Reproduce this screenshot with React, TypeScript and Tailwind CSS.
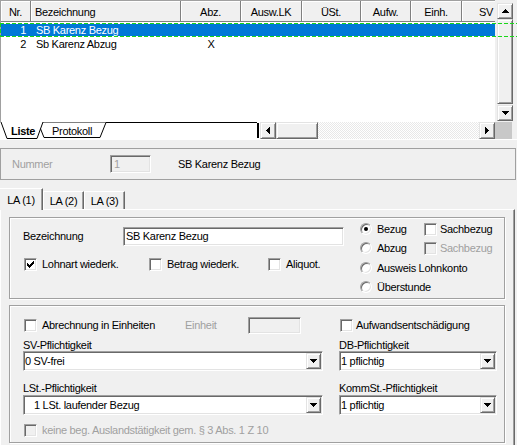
import React from 'react';

const sunken =
  'border border-t-[#a0a0a0] border-l-[#a0a0a0] border-r-white border-b-white shadow-[inset_1px_1px_0_#696969,inset_-1px_-1px_0_#e3e3e3] p-px';
const raised =
  'bg-[#f0f0f0] border border-t-[#e3e3e3] border-l-[#e3e3e3] border-r-[#696969] border-b-[#696969] shadow-[inset_1px_1px_0_#ffffff,inset_-1px_-1px_0_#a0a0a0]';
const groupBox =
  'border border-[#a0a0a0] shadow-[inset_1px_1px_0_#ffffff,1px_1px_0_#ffffff]';

type Dir = 'up' | 'down' | 'left' | 'right';
const ARROWS: Record<Dir, { w: number; h: number; d: string }> = {
  down: { w: 7, h: 4, d: 'M0 0h7v1H0zM1 1h5v1H1zM2 2h3v1H2zM3 3h1v1H3z' },
  up: { w: 7, h: 4, d: 'M3 0h1v1H3zM2 1h3v1H2zM1 2h5v1H1zM0 3h7v1H0z' },
  right: { w: 4, h: 7, d: 'M0 0h1v7H0zM1 1h1v5H1zM2 2h1v3H2zM3 3h1v1H3z' },
  left: { w: 4, h: 7, d: 'M3 0h1v7H3zM2 1h1v5H2zM1 2h1v3H1zM0 3h1v1H0z' },
};

function Arrow({ dir }: { dir: Dir }) {
  const a = ARROWS[dir];
  return (
    <svg width={a.w} height={a.h} viewBox={`0 0 ${a.w} ${a.h}`} shapeRendering="crispEdges">
      <path d={a.d} fill="#000" />
    </svg>
  );
}

function Box({ checked, disabled }: { checked?: boolean; disabled?: boolean }) {
  return (
    <span
      className={`w-[13px] h-[13px] shrink-0 flex items-center justify-center ${sunken} ${
        disabled ? 'bg-[#f0f0f0]' : 'bg-white'
      }`}
    >
      {checked && (
        <svg width="7" height="7" viewBox="0 0 7 7" shapeRendering="crispEdges">
          <path d="M0 2h1v3H0zM1 3h1v3H1zM2 4h1v3H2zM3 3h1v3H3zM4 2h1v3H4zM5 1h1v3H5zM6 0h1v3H6z" fill="#000" />
        </svg>
      )}
    </span>
  );
}

function CheckItem({
  label,
  checked,
  disabled,
  gap = 'ml-[5px]',
  className = '',
}: {
  label: string;
  checked?: boolean;
  disabled?: boolean;
  gap?: string;
  className?: string;
}) {
  return (
    <div className={`flex items-center h-[13px] ${className}`}>
      <Box checked={checked} disabled={disabled} />
      <span className={`${gap} whitespace-nowrap ${disabled ? 'text-[#a0a0a0]' : ''}`}>{label}</span>
    </div>
  );
}

function Radio({ label, on, className = '' }: { label: string; on?: boolean; className?: string }) {
  return (
    <div className={`flex items-center h-[14px] ${className}`}>
      <span className="w-[12px] h-[12px] shrink-0 rounded-full bg-white border border-t-[#a0a0a0] border-l-[#a0a0a0] border-r-white border-b-white shadow-[inset_1px_1px_0_#696969,inset_-1px_-1px_0_#e3e3e3] flex items-center justify-center">
        {on && <span className="w-[4px] h-[4px] rounded-full bg-black" />}
      </span>
      <span className="ml-[5px] whitespace-nowrap">{label}</span>
    </div>
  );
}

function Combo({ value, className = '', textPad = '' }: { value: string; className?: string; textPad?: string }) {
  return (
    <div className={`h-[20px] flex bg-white ${sunken} ${className}`}>
      <div className={`flex-1 flex items-center whitespace-nowrap ${textPad}`}>{value}</div>
      <div className={`w-[15px] flex items-center justify-center ${raised}`}>
        <Arrow dir="down" />
      </div>
    </div>
  );
}

const COLS = [
  { t: 'Nr.', c: 'w-[30px] justify-center' },
  { t: 'Bezeichnung', c: 'w-[150px] justify-start pl-[4px]' },
  { t: 'Abz.', c: 'w-[60px] justify-center' },
  { t: 'Ausw.LK', c: 'w-[61px] justify-center' },
  { t: 'ÜSt.', c: 'w-[59px] justify-center' },
  { t: 'Aufw.', c: 'w-[50px] justify-center' },
  { t: 'Einh.', c: 'w-[51px] justify-center' },
  { t: 'SV', c: 'w-[34px] justify-end pr-[2px]' },
];

const ROWS = [
  { nr: '1', name: 'SB Karenz Bezug', abz: '', selected: true },
  { nr: '2', name: 'Sb Karenz Abzug', abz: 'X', selected: false },
];

const dash = 'bg-[repeating-linear-gradient(90deg,#18d818_0_4px,transparent_4px_6px)]';

export default function App() {
  return (
    <div className="w-[517px] h-[445px] overflow-hidden bg-[#f0f0f0] text-black text-[11px] leading-[13px] tracking-[-0.3px] font-['Liberation_Sans',Arial,sans-serif]">
      {/* List */}
      <div className="relative">
        <div className="flex h-[122px]">
          <div className="w-[495px] shrink-0 bg-white border-t border-l border-[#a0a0a0] overflow-hidden">
            <div className="flex">
              {COLS.map((col) => (
                <div
                  key={col.t}
                  className={`${col.c} shrink-0 h-[21px] pt-[3px] flex items-center whitespace-nowrap bg-[#f0f0f0] border-r border-b border-[#808080] shadow-[inset_1px_1px_0_#ffffff]`}
                >
                  {col.t}
                </div>
              ))}
            </div>
            <div className="pt-px">
              {ROWS.map((r) => (
                <div key={r.nr} className="h-[14px] flex items-center">
                  <div
                    className={`flex items-center h-[12px] w-full ${
                      r.selected ? 'bg-[#0078d7] text-white' : ''
                    }`}
                  >
                    <span className="w-[30px] shrink-0 text-right pr-[5px]">{r.nr}</span>
                    <span className="w-[150px] shrink-0 pl-[5px]">{r.name}</span>
                    <span className="w-[60px] shrink-0 text-center">{r.abz}</span>
                  </div>
                </div>
              ))}
            </div>
          </div>
          <div className="w-[22px] shrink-0 pl-[2px] pt-[3px]">
            <div className="w-[16px] flex flex-col">
              <div className={`h-[16px] flex items-center justify-center ${raised}`}>
                <Arrow dir="up" />
              </div>
              <div className={`h-[85px] ${raised}`} />
              <div className="h-px" />
              <div className={`h-[16px] flex items-center justify-center ${raised}`}>
                <Arrow dir="down" />
              </div>
            </div>
          </div>
        </div>

        <div className="flex h-[17px]">
          <div className="w-[260px] shrink-0 relative bg-white">
            <svg className="absolute inset-0" width="260" height="17" viewBox="0 0 260 17">
              <path d="M43 0.5H257" stroke="#000" fill="none" shapeRendering="crispEdges" />
              <path d="M38 0.5L44 15.5H100L106 0.5" stroke="#000" fill="#ffffff" />
              <path d="M1 0L7 16.5H37L43 0Z" fill="#ffffff" />
              <path d="M1 0L7 16.5H37L43 0" stroke="#000" fill="none" />
              <rect x="257" y="1" width="2" height="15" fill="#000" />
            </svg>
            <div className="relative flex items-center h-full pt-[2px]">
              <span className="w-[41px] pl-[11px] font-bold">Liste</span>
              <span className="pl-[11px]">Protokoll</span>
            </div>
          </div>
          <div className="w-[235px] shrink-0 flex">
            <div className={`w-[16px] flex items-center justify-center ${raised}`}>
              <Arrow dir="left" />
            </div>
            <div className={`w-[42px] ${raised}`} />
            <div className="flex-1 bg-[repeating-conic-gradient(#ffffff_0_25%,#e8e8e8_0_50%)] bg-[length:2px_2px]" />
            <div className={`w-[16px] flex items-center justify-center ${raised}`}>
              <Arrow dir="right" />
            </div>
          </div>
          <div className="w-[17px] shrink-0 bg-[#c8c8c8]" />
        </div>

        {/* focus rectangle of the selected row */}
        <div className={`absolute left-0 top-[23px] w-[517px] h-px ${dash}`} />
        <div className={`absolute left-0 top-[36px] w-[517px] h-px ${dash}`} />
        <div className="absolute left-0 top-[23px] w-px h-[14px] bg-[repeating-linear-gradient(180deg,#18d818_0_4px,transparent_4px_6px)]" />
      </div>

      <div className="h-[9px] border-t border-white" />

      {/* Nummer panel */}
      <div className="w-[516px] h-[32px] border border-[#a0a0a0] flex items-center">
        <span className="w-[109px] pl-[11px] text-[#a0a0a0]">Nummer</span>
        <div className={`w-[41px] h-[18px] bg-[#f0f0f0] flex items-center pl-[3px] text-[#a0a0a0] ${sunken}`}>1</div>
        <span className="ml-[27px]">SB Karenz Bezug</span>
      </div>

      <div className="h-[8px]" />

      {/* Page tabs */}
      <div className="flex items-end h-[21px]">
        <div className="relative z-10 -mb-px w-[43px] h-[22px] pt-[2px] flex items-center justify-center bg-[#f0f0f0] border-t border-r border-t-white border-r-[#696969] shadow-[inset_-1px_0_0_#a0a0a0]">
          LA (1)
        </div>
        <div className="w-[41px] h-[18px] pt-[2px] flex items-center justify-center border-t border-l border-r border-t-white border-l-white border-r-[#696969] shadow-[inset_-1px_0_0_#a0a0a0]">
          LA (2)
        </div>
        <div className="w-[41px] h-[18px] pt-[2px] flex items-center justify-center border-t border-l border-r border-t-white border-l-white border-r-[#696969] shadow-[inset_-1px_0_0_#a0a0a0]">
          LA (3)
        </div>
      </div>

      {/* Tab sheet */}
      <div className="w-[515px] h-[236px] border-t border-l border-r border-t-white border-l-white border-r-[#696969] shadow-[inset_-1px_0_0_#a0a0a0] pl-[8px] pt-[7px]">
        {/* Group 1 */}
        <div className={`w-[496px] h-[82px] flex ${groupBox}`}>
          <div className="w-[350px] shrink-0 pl-[13px] pt-[9px]">
            <div className="flex items-center h-[19px]">
              <span className="w-[100px]">Bezeichnung</span>
              <div className={`w-[221px] h-[19px] bg-white flex items-center pl-[2px] ${sunken}`}>SB Karenz Bezug</div>
            </div>
            <div className="flex mt-[12px] pl-px">
              <CheckItem label="Lohnart wiederk." checked className="w-[125px]" />
              <CheckItem label="Betrag wiederk." className="w-[119px]" />
              <CheckItem label="Aliquot." />
            </div>
          </div>
          <div className="flex flex-col pt-[4px]">
            <div className="flex">
              <Radio label="Bezug" on className="w-[64px]" />
              <CheckItem label="Sachbezug" gap="ml-[3px]" className="mt-px" />
            </div>
            <div className="flex mt-[5px]">
              <Radio label="Abzug" className="w-[64px]" />
              <CheckItem label="Sachbezug" disabled gap="ml-[3px]" className="mt-px" />
            </div>
            <Radio label="Ausweis Lohnkonto" className="mt-[6px]" />
            <Radio label="Überstunde" className="mt-[5px]" />
          </div>
        </div>

        {/* Group 2 */}
        <div className={`w-[496px] h-[138px] mt-[6px] pl-[13px] pt-[11px] ${groupBox}`}>
          <div className="flex h-[17px] items-center">
            <div className="w-[300px] shrink-0 flex items-center">
              <CheckItem label="Abrechnung in Einheiten" className="w-[161px] ml-px" />
              <span className="w-[63px] text-[#a0a0a0]">Einheit</span>
              <div className={`w-[53px] h-[17px] bg-[#f0f0f0] ${sunken}`} />
            </div>
            <CheckItem label="Aufwandsentschädigung" gap="ml-[3px]" className="ml-[17px]" />
          </div>

          <div className="flex mt-[6px] h-[11px] leading-[11px]">
            <span className="w-[300px] shrink-0">SV-Pflichtigkeit</span>
            <span className="ml-[16px]">DB-Pflichtigkeit</span>
          </div>
          <div className="flex">
            <Combo value="0 SV-frei" className="w-[300px] shrink-0" />
            <Combo value="1 pflichtig" className="w-[158px] ml-[16px]" />
          </div>

          <div className="flex mt-[12px] h-[11px] leading-[11px]">
            <span className="w-[300px] shrink-0">LSt.-Pflichtigkeit</span>
            <span className="ml-[16px]">KommSt.-Pflichtigkeit</span>
          </div>
          <div className="flex mt-px">
            <Combo value="1 LSt. laufender Bezug" textPad="pl-[9px]" className="w-[300px] shrink-0" />
            <Combo value="1 pflichtig" className="w-[158px] ml-[16px]" />
          </div>

          <CheckItem
            label="keine beg. Auslandstätigkeit gem. § 3 Abs. 1 Z 10"
            disabled
            className="mt-[9px] ml-px"
          />
        </div>
      </div>
    </div>
  );
}
